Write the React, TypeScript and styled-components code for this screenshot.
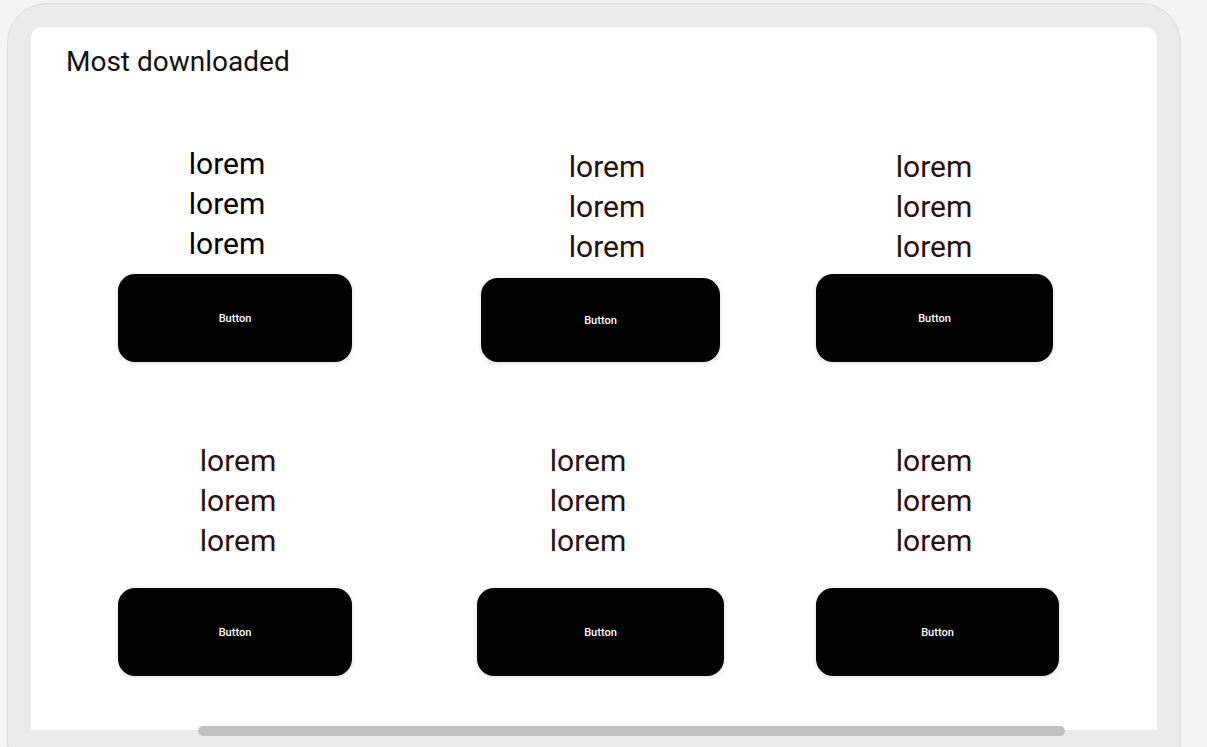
import React from "react";
import styled, { createGlobalStyle } from "styled-components";

const GlobalStyle = createGlobalStyle`
  html, body {
    margin: 0;
    padding: 0;
    overflow: hidden;
    background: #f4f4f4;
    font-family: Roboto, "Liberation Sans", Arial, sans-serif;
  }
`;

const Frame = styled.div`
  position: relative;
  box-sizing: border-box;
  margin: 3px 0 0 7px;
  width: 1174px;
  height: 780px;
  padding: 23px 23px 0 23px;
  background: #ebebeb;
  border: 1px solid #dcdcdc;
  border-radius: 40px;
  overflow: hidden;
`;

const Card = styled.section`
  box-sizing: border-box;
  height: 703px;
  background: #ffffff;
  border-radius: 11px 12px 0 0;
  padding: 19px 0 0 35px;
  overflow: hidden;
`;

const Title = styled.h2`
  margin: 0;
  font-size: 28px;
  line-height: 32px;
  font-weight: 400;
  color: #111111;
`;

const Grid = styled.div`
  display: grid;
  grid-template-columns: 359px 339px 243px;
  row-gap: 79px;
  align-items: end;
  margin: 66px 0 0 52px;
`;

const Cell = styled.div<{ $top?: number }>`
  display: flex;
  flex-direction: column;
  align-items: flex-start;
  align-self: ${(p) => (p.$top ? "start" : "end")};
`;

const Lines = styled.div<{ $shift: number; $ink: string }>`
  width: 120px;
  margin-left: ${(p) => p.$shift}px;
  text-align: center;
  font-size: 30px;
  line-height: 40px;
  color: ${(p) => p.$ink};
`;

const Action = styled.button<{ $w: number; $h: number; $gap: number; $left: number }>`
  box-sizing: border-box;
  width: ${(p) => p.$w}px;
  height: ${(p) => p.$h}px;
  margin: ${(p) => p.$gap}px 0 0 ${(p) => p.$left}px;
  border: none;
  border-radius: 17px;
  background: #020202;
  color: #ffffff;
  font-family: Roboto, "Liberation Sans", Arial, sans-serif;
  font-size: 11px;
  font-weight: 500;
  box-shadow: 0 1px 5px rgba(0, 0, 0, 0.14);
  cursor: pointer;
`;

const ScrollThumb = styled.div`
  position: absolute;
  left: 190px;
  top: 722px;
  width: 867px;
  height: 10px;
  border-radius: 5px;
  background: #c1c1c1;
`;

type Item = {
  shift: number;
  ink: string;
  w: number;
  h: number;
  gap: number;
  left: number;
  top?: number;
};

const BROWN = "#2a0f0f";

const items: Item[] = [
  { shift: 49, ink: "#000000", w: 234, h: 88, gap: 10, left: 0 },
  { shift: 70, ink: BROWN, w: 239, h: 84, gap: 11, left: 4 },
  { shift: 58, ink: BROWN, w: 237, h: 88, gap: 7, left: 0 },
  { shift: 60, ink: BROWN, w: 234, h: 88, gap: 27, left: 0, top: 1 },
  { shift: 51, ink: BROWN, w: 247, h: 88, gap: 27, left: 0, top: 1 },
  { shift: 58, ink: BROWN, w: 243, h: 88, gap: 27, left: 0, top: 1 },
];

export default function App() {
  return (
    <>
      <GlobalStyle />
      <Frame>
        <Card>
          <Title>Most downloaded</Title>
          <Grid>
            {items.map((it, i) => (
              <Cell key={i} $top={it.top}>
                <Lines $shift={it.shift} $ink={it.ink}>
                  lorem
                  <br />
                  lorem
                  <br />
                  lorem
                </Lines>
                <Action $w={it.w} $h={it.h} $gap={it.gap} $left={it.left}>
                  Button
                </Action>
              </Cell>
            ))}
          </Grid>
        </Card>
        <ScrollThumb />
      </Frame>
    </>
  );
}
